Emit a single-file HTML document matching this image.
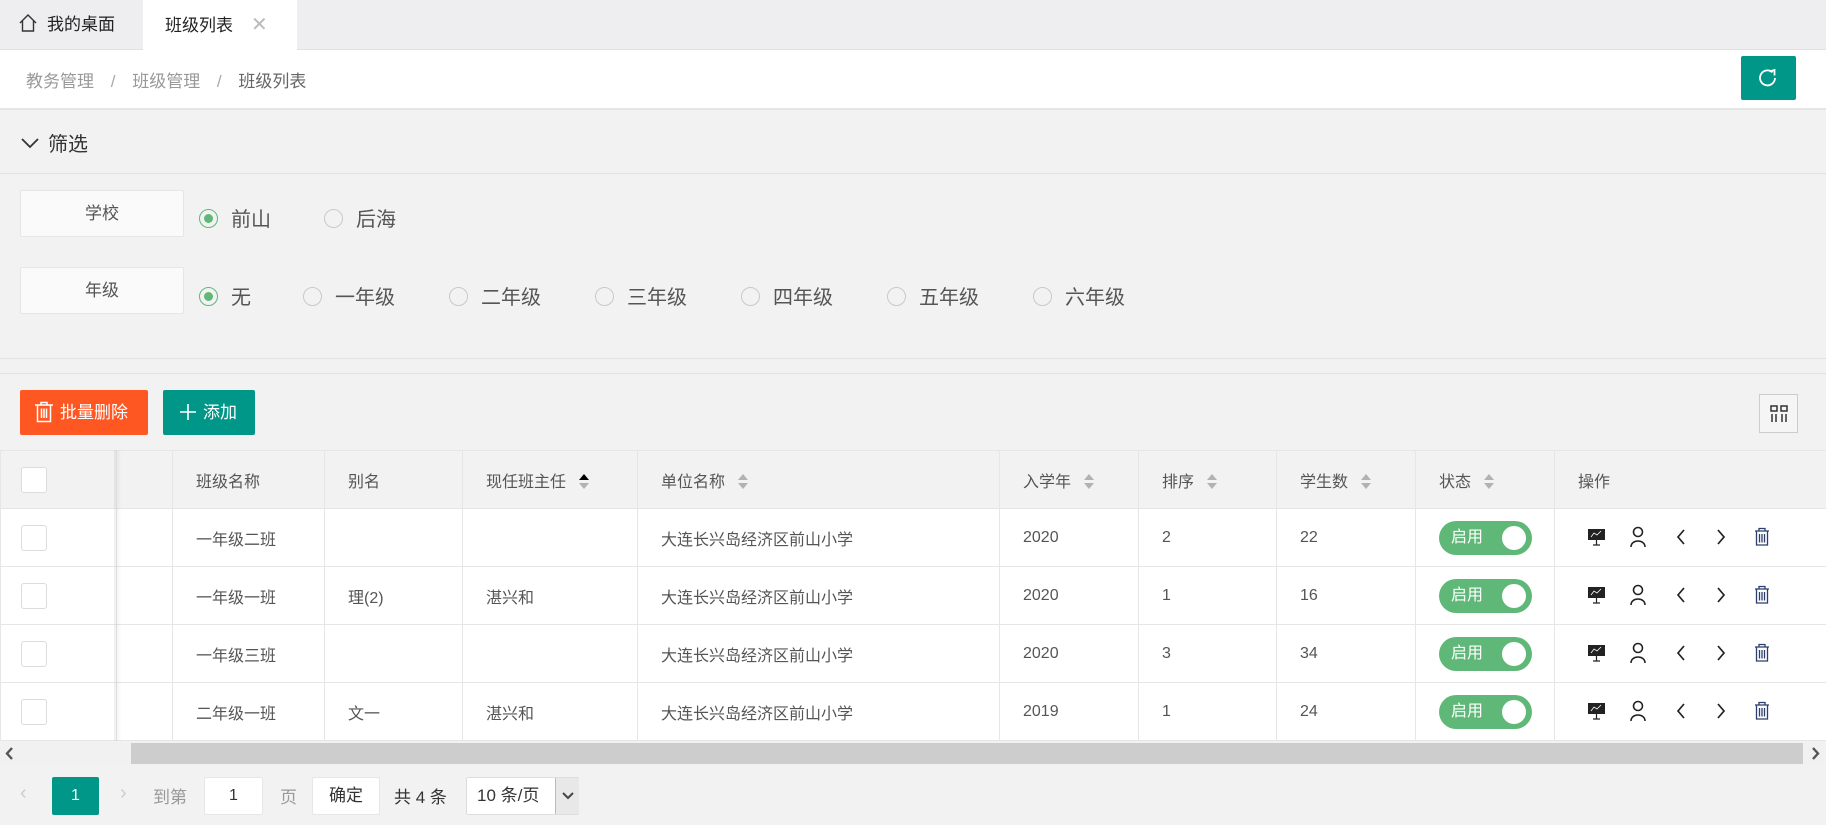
<!DOCTYPE html>
<html><head><meta charset="utf-8">
<style>
*{margin:0;padding:0;box-sizing:border-box}
body{width:1826px;height:825px;overflow:hidden;background:#f2f2f2;font-family:"Liberation Sans","Noto Sans CJK SC",sans-serif;color:#555;position:relative}
.a{position:absolute}
.tabs{left:0;top:0;width:1826px;height:50px;background:#eeeef0;border-bottom:1px solid #e2e2e2}
.crumb{left:0;top:50px;width:1826px;height:60px;background:#fff;border-bottom:2px solid #e4e4e4}
.rad{position:absolute;width:19px;height:19px;border:1.5px solid #c9c9c9;border-radius:50%}
.rad.on{border-color:#5fb878}
.rad.on:after{content:"";position:absolute;left:3.5px;top:3.5px;width:9px;height:9px;border-radius:50%;background:#5fb878}
.rl{position:absolute;font-size:20px;color:#555}
.lbl{position:absolute;left:20px;width:164px;height:47px;background:#fafafa;border:1px solid #e6e6e6;border-radius:2px;text-align:center;line-height:45px;font-size:17px;color:#555}
table{border-collapse:collapse;position:absolute;left:0;top:450px;table-layout:fixed;width:1826px}
td,th{border:1px solid #e6e6e6;height:58px;font-size:16px;font-weight:normal;text-align:left;padding-left:23px;color:#555}
th{background:#f2f2f2}
td{background:#fff}
.cb{display:inline-block;width:26px;height:26px;border:1px solid #dcdcdc;border-radius:3px;background:#fff;vertical-align:middle;margin-left:-3px}
.sort{display:inline-block;width:12px;height:18px;vertical-align:middle;margin-left:12px;position:relative}
.sort:before{content:"";position:absolute;left:1px;top:1px;border:5px solid transparent;border-bottom:6px solid #b2b2b2;border-top:0}
.sort:after{content:"";position:absolute;left:1px;top:10px;border:5px solid transparent;border-top:6px solid #b2b2b2;border-bottom:0}
.sort.up:before{border-bottom-color:#000}
.sw{display:inline-block;width:93px;height:34px;border-radius:17px;background:#5fb878;color:#fff;position:relative;font-size:16px;line-height:34px;padding-left:12px;vertical-align:middle}
.sw:after{content:"";position:absolute;right:6px;top:5px;width:24px;height:24px;border-radius:50%;background:#fff}
</style></head><body>
<div class="a tabs">
 <div class="a" style="left:0;top:0;width:143px;height:50px;font-size:17px;color:#222;line-height:50px;padding-left:18px">
  <svg width="20" height="20" viewBox="0 0 20 20" style="position:absolute;left:18px;top:13px"><path d="M2 10 L10 2 L18 10 M4.5 8 V18 H15.5 V8" fill="none" stroke="#333" stroke-width="1.4"/></svg>
  <span style="margin-left:29px">我的桌面</span></div>
 <div class="a" style="left:143px;top:0;width:154px;height:51px;background:#fff;font-size:17px;color:#222;line-height:50px;padding-left:22px">班级列表<span style="color:#bbb;margin-left:18px;font-size:20px">✕</span></div>
</div>
<div class="a crumb"><div class="a" style="left:26px;top:17px;font-size:17px;color:#999">教务管理 <span style="margin:0 12px;color:#aaa">/</span> 班级管理 <span style="margin:0 12px;color:#aaa">/</span> <span style="color:#666">班级列表</span></div>
 <div class="a" style="left:1741px;top:6px;width:55px;height:44px;background:#009688;border-radius:2px">
  <svg width="24" height="24" viewBox="0 0 24 24" style="position:absolute;left:15px;top:10px"><path d="M19 12 A7.5 7.5 0 1 1 16.5 6.3" fill="none" stroke="#fff" stroke-width="1.8"/><path d="M13.5 5.5 L18.5 4 L18.5 9.5" fill="none" stroke="#fff" stroke-width="1.8"/></svg></div>
</div>
<div class="a" style="left:0;top:110px;width:1826px;height:64px;border-bottom:1px solid #e2e2e2">
 <svg width="20" height="14" class="a" style="left:20px;top:26px"><path d="M2 3 L10 11 L18 3" fill="none" stroke="#333" stroke-width="1.8"/></svg>
 <div class="a" style="left:48px;top:18px;font-size:20px;color:#333">筛选</div>
</div>
<div class="lbl" style="top:190px">学校</div>
<div class="rad on" style="left:199px;top:209px"></div><div class="rl" style="left:231px;top:203px">前山</div>
<div class="rad" style="left:324px;top:209px"></div><div class="rl" style="left:356px;top:203px">后海</div>
<div class="lbl" style="top:267px">年级</div>
<div class="rad on" style="left:199px;top:287px"></div><div class="rl" style="left:231px;top:281px">无</div>
<div class="rad" style="left:303px;top:287px"></div><div class="rl" style="left:335px;top:281px">一年级</div>
<div class="rad" style="left:449px;top:287px"></div><div class="rl" style="left:481px;top:281px">二年级</div>
<div class="rad" style="left:595px;top:287px"></div><div class="rl" style="left:627px;top:281px">三年级</div>
<div class="rad" style="left:741px;top:287px"></div><div class="rl" style="left:773px;top:281px">四年级</div>
<div class="rad" style="left:887px;top:287px"></div><div class="rl" style="left:919px;top:281px">五年级</div>
<div class="rad" style="left:1033px;top:287px"></div><div class="rl" style="left:1065px;top:281px">六年级</div>
<div class="a" style="left:0;top:358px;width:1826px;height:16px;border-top:1px solid #e2e2e2;border-bottom:1px solid #e2e2e2"></div>
<div class="a" style="left:20px;top:390px;width:128px;height:45px;background:#ff5722;border-radius:2px;color:#fff;font-size:17px;line-height:45px;padding-left:40px">
 <svg width="20" height="22" viewBox="0 0 20 22" style="position:absolute;left:14px;top:11px"><path d="M1 4 H19 M7 4 V1.5 H13 V4 M3.5 4 V20.5 H16.5 V4 M7.5 7.5 V17 M10 7.5 V17 M12.5 7.5 V17" fill="none" stroke="#fff" stroke-width="1.5"/></svg>批量删除</div>
<div class="a" style="left:163px;top:390px;width:92px;height:45px;background:#009688;border-radius:2px;color:#fff;font-size:17px;line-height:45px;padding-left:40px">
 <svg width="16" height="16" style="position:absolute;left:17px;top:14px"><path d="M8 0 V16 M0 8 H16" stroke="#fff" stroke-width="1.6"/></svg>添加</div>
<div class="a" style="left:1759px;top:394px;width:39px;height:39px;border:1px solid #ccc;background:#f5f5f5">
 <svg width="18" height="18" viewBox="0 0 18 18" style="position:absolute;left:10px;top:10px"><path d="M1 1 H7 V6 H1 Z M11 1 H17 V6 H11 Z M2 9 V17 M6 9 V17 M12 9 V17 M16 9 V17" fill="none" stroke="#333" stroke-width="1.5"/></svg></div>
<table>
<colgroup><col style="width:116px"><col style="width:56px"><col style="width:152px"><col style="width:138px"><col style="width:175px"><col style="width:362px"><col style="width:139px"><col style="width:138px"><col style="width:139px"><col style="width:139px"><col style="width:272px"></colgroup>
<tr><th><span class="cb"></span></th><th></th><th>班级名称</th><th>别名</th><th>现任班主任<span class="sort up"></span></th><th>单位名称<span class="sort"></span></th><th>入学年<span class="sort"></span></th><th>排序<span class="sort"></span></th><th>学生数<span class="sort"></span></th><th>状态<span class="sort"></span></th><th>操作</th></tr>
<tr><td><span class="cb"></span></td><td></td><td>一年级二班</td><td></td><td></td><td>大连长兴岛经济区前山小学</td><td>2020</td><td>2</td><td>22</td><td><span class="sw">启用</span></td><td></td></tr>
<tr><td><span class="cb"></span></td><td></td><td>一年级一班</td><td>理(2)</td><td>湛兴和</td><td>大连长兴岛经济区前山小学</td><td>2020</td><td>1</td><td>16</td><td><span class="sw">启用</span></td><td></td></tr>
<tr><td><span class="cb"></span></td><td></td><td>一年级三班</td><td></td><td></td><td>大连长兴岛经济区前山小学</td><td>2020</td><td>3</td><td>34</td><td><span class="sw">启用</span></td><td></td></tr>
<tr><td><span class="cb"></span></td><td></td><td>二年级一班</td><td>文一</td><td>湛兴和</td><td>大连长兴岛经济区前山小学</td><td>2019</td><td>1</td><td>24</td><td><span class="sw">启用</span></td><td></td></tr>
</table>
<div class="a" style="left:114px;top:450px;width:8px;height:291px;background:linear-gradient(to right,rgba(0,0,0,0.06),rgba(0,0,0,0))"></div>
<svg class="a" style="left:1580px;top:522px" width="200" height="240" viewBox="0 0 200 240">
<defs><g id="r">
<rect x="8" y="7" width="17" height="11" fill="#222"/><path d="M11 15 L14 11 L17 13 L21 9" stroke="#fff" stroke-width="0.8" fill="none"/><path d="M16.5 18 V23 M13 23 H20" stroke="#222" stroke-width="1.2"/>
<circle cx="58" cy="10" r="4.5" fill="none" stroke="#222" stroke-width="1.6"/><path d="M51 25 C51 17 65 17 65 25" fill="none" stroke="#222" stroke-width="1.6"/>
<path d="M104 8 L98 15 L104 22" fill="none" stroke="#222" stroke-width="1.7"/>
<path d="M138 8 L144 15 L138 22" fill="none" stroke="#222" stroke-width="1.7"/>
<path d="M175 9 H189 M179 9 V6.5 H185 V9 M176.5 9 V23 H187.5 V9 M179.5 12 V20.5 M182 12 V20.5 M184.5 12 V20.5" fill="none" stroke="#2c3e6c" stroke-width="1.3"/>
</g></defs>
<use href="#r" y="0"/><use href="#r" y="58"/><use href="#r" y="116"/><use href="#r" y="174"/>
</svg>
<div class="a" style="left:0;top:742px;width:1826px;height:23px;background:#f1f1f1">
 <div class="a" style="left:131px;top:1px;width:1672px;height:21px;background:#cdcdcd"></div>
 <svg class="a" style="left:4px;top:5px" width="10" height="13"><path d="M8 1 L3 6.5 L8 12" fill="none" stroke="#555" stroke-width="2.4"/></svg>
 <svg class="a" style="left:1811px;top:5px" width="10" height="13"><path d="M2 1 L7 6.5 L2 12" fill="none" stroke="#555" stroke-width="2.4"/></svg>
</div>
<div class="a" style="left:20px;top:782px;font-size:20px;color:#ccc">‹</div>
<div class="a" style="left:52px;top:777px;width:47px;height:38px;background:#009688;border-radius:2px;color:#fff;text-align:center;line-height:38px;font-size:16px">1</div>
<div class="a" style="left:120px;top:782px;font-size:20px;color:#ccc">›</div>
<div class="a" style="left:153px;top:783px;font-size:17px;color:#999">到第</div>
<div class="a" style="left:204px;top:777px;width:59px;height:38px;background:#fff;border:1px solid #e6e6e6;border-radius:2px;text-align:center;line-height:36px;font-size:16px;color:#333">1</div>
<div class="a" style="left:280px;top:783px;font-size:17px;color:#999">页</div>
<div class="a" style="left:312px;top:777px;width:68px;height:38px;background:#fff;border:1px solid #e6e6e6;border-radius:2px;text-align:center;line-height:36px;font-size:17px;color:#333">确定</div>
<div class="a" style="left:394px;top:783px;font-size:17px;color:#333">共 4 条</div>
<div class="a" style="left:466px;top:777px;width:113px;height:38px;background:#fff;border:1px solid #ddd;border-radius:2px;font-size:17px;color:#333;line-height:36px;padding-left:10px">10 条/页
 <div class="a" style="left:88px;top:0;width:24px;height:36px;background:#e8e8e8;border-left:1px solid #bbb"><svg width="12" height="8" style="position:absolute;left:6px;top:14px"><path d="M1 1 L6 6 L11 1" fill="none" stroke="#444" stroke-width="2"/></svg></div></div>
</body></html>
